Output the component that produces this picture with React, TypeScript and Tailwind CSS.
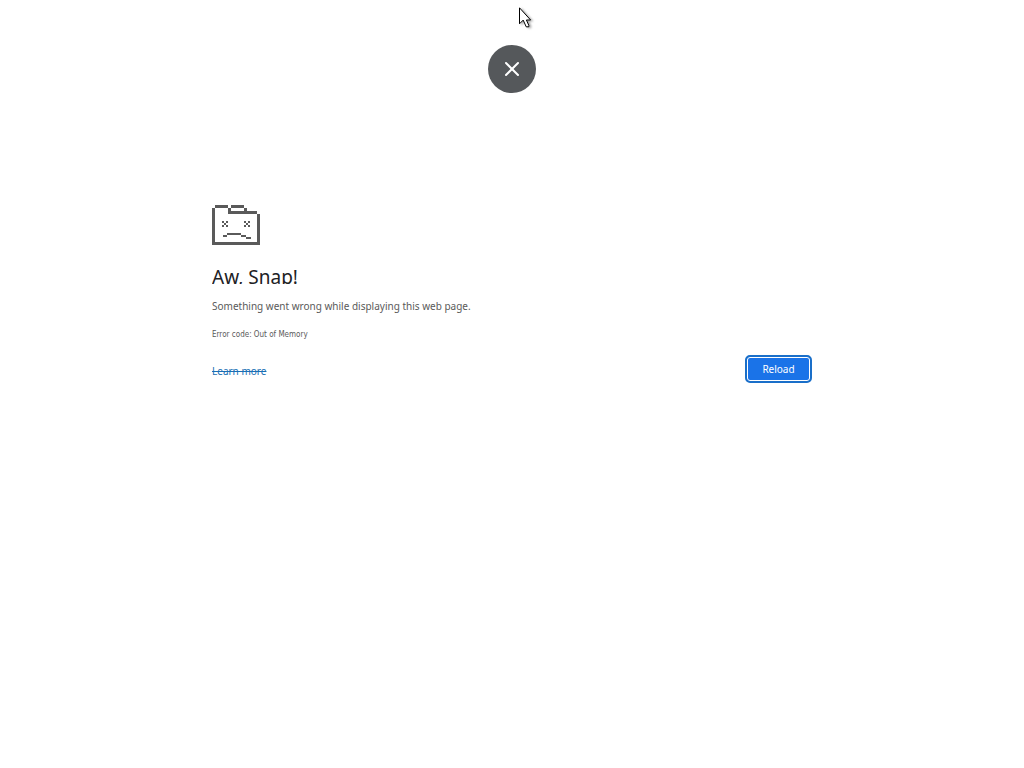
import { X } from 'lucide-react'

function SadFolder() {
  return (
    <svg width="48" height="40" viewBox="0 0 48 40" fill="#5a5a5a" shapeRendering="crispEdges" aria-hidden="true">
      {/* outline */}
      <path d="M3 0h13v3H3zM0 3h3v37H0zM16 3h3v6h-3zM19 0h13v3H19zM32 3h3v3h-3zM19 6h26v3H19zM45 9h3v31h-3zM3 37h42v3H3z" />
      {/* eyes */}
      <path d="M10 16h2v2h-2zM14 16h2v2h-2zM12 18h2v2h-2zM10 20h2v2h-2zM14 20h2v2h-2zM32 16h2v2h-2zM36 16h2v2h-2zM34 18h2v2h-2zM32 20h2v2h-2zM36 20h2v2h-2z" />
      {/* mouth */}
      <path d="M11 30h4v2h-4zM15 28h14v2H15zM29 30h5v2h-5zM34 32h5v2h-5z" />
    </svg>
  )
}

function Cursor() {
  return (
    <svg
      width="14"
      height="22"
      viewBox="0 0 14 22"
      className="pointer-events-none absolute top-[7px] left-1/2 ml-[7px] drop-shadow-[2px_1px_1px_rgba(0,0,0,0.35)]"
      aria-hidden="true"
    >
      <path d="M.5 .8v16l3.700-3.700 3 6.700h2.600v-1.500l-2.400-5.300h4.200z" fill="#fff" stroke="#000" />
    </svg>
  )
}

export default function App() {
  return (
    <div className="relative min-h-screen bg-white px-6 pt-[45px] font-['Noto_Sans',sans-serif] text-[#5a5a5a]">
      <Cursor />

      <button
        type="button"
        aria-label="Close"
        className="mx-auto flex size-12 items-center justify-center rounded-full bg-[#55585b] text-white"
      >
        <X size={24} strokeWidth={2} />
      </button>

      <main className="mx-auto mt-28 max-w-[600px]">
        <SadFolder />

        <h1 className="mt-5 h-[19px] overflow-hidden text-[19px] leading-6 text-[#202124]">Aw, Snap!</h1>

        <p className="mt-3 text-[10px] leading-5">Something went wrong while displaying this web page.</p>
        <p className="mt-3 font-['DejaVu_Sans_Condensed',sans-serif] text-[8px] leading-[14px]">
          Error code: Out of Memory
        </p>

        <div className="mt-[13px] flex items-end justify-between">
          <a href="#" className="text-[10px] leading-6 text-[#1a6fb5] line-through">
            Learn more
          </a>
          <button
            type="button"
            className="h-7 w-[67px] rounded-[5px] border-2 border-[#1a6fc9] bg-[#1a73e8] text-[10px] text-white inset-ring inset-ring-white"
          >
            Reload
          </button>
        </div>
      </main>
    </div>
  )
}
